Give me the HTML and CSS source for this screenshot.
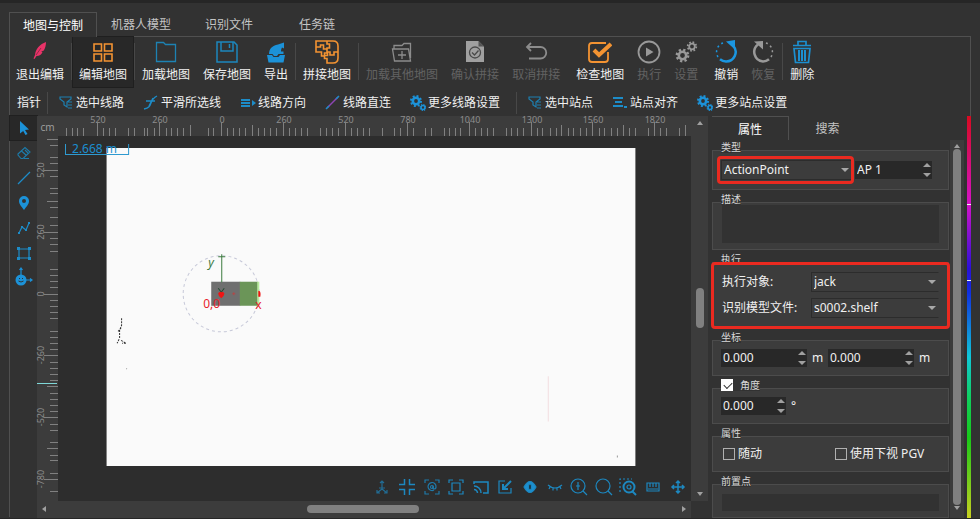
FILE: index.html
```html
<!DOCTYPE html>
<html lang="zh-CN">
<head>
<meta charset="utf-8">
<title>地图与控制</title>
<link rel="stylesheet" href="styles.css">
</head>
<body>
<div class="app">
  <nav class="tabs">
    <button class="tab tab-active">地图与控制</button>
    <button class="tab">机器人模型</button>
    <button class="tab">识别文件</button>
    <button class="tab">任务链</button>
  </nav>
  <main class="pane">
    <div class="toolbar">
      <button class="tool"><svg viewBox="0 0 24 24"><path fill="#e83368" d="M18 2C12 4 7.500 9 7 15L5.500 18.500l1 .5 2-3c3 0 5-1.500 6-4l-1.500-.3 2.800-1.200c1.500-2.500 2.200-5.500 2.200-8.500z"/><path stroke="#7c2440" stroke-width=".8" d="M8 15l5-7"/></svg>退出编辑</button>
      <span class="sep"></span>
      <button class="tool tool-active"><svg viewBox="0 0 24 24" fill="none" stroke="#f39332" stroke-width="1.600"><path d="M3 4h7.500v7H3zM13.500 4H21v7h-7.500zM3 14h7.500v7H3zM13.500 14H21v7h-7.500z"/></svg>编辑地图</button>
      <span class="sep"></span>
      <button class="tool"><svg viewBox="0 0 24 24" fill="none" stroke="#1d82b3" stroke-width="1.300"><path d="M2.500 21.500V2.500h7l2 2h10v17z"/></svg>加载地图</button>
      <button class="tool"><svg viewBox="0 0 24 24" fill="none" stroke="#1d87bd" stroke-width="1.500"><path d="M2 2h17l3 3v17H2z"/><path d="M6 2v9h12V2M14.500 4v4"/></svg>保存地图</button>
      <button class="tool"><svg viewBox="0 0 24 24" fill="#1c92d8"><path d="M3 15h5l1.500 2h5l1.500-2h5l-1.500 7.500h-15zM14 4.500l6-2v6l-2-1c-1 2-1 3-1 4h2.500v2.500h-5l-1.500 2h-3l-1.500-2H5C5 9 8 5.500 14 4.500z"/></svg>导出</button>
      <span class="sep"></span>
      <button class="tool"><svg viewBox="0 0 24 24" fill="none" stroke="#f39332" stroke-width="1.600"><path d="M1 1h17q5 0 5 5v12q0 5-5 5h-6v-4.500H9.500v-3h3V13h-3v3h-3v-4H1zM12 1v3h2.500v4H12v4h3v3h4v-3h4M1 7h4.500V5h3v4H12M12 23v-4"/></svg>拼接地图</button>
      <span class="sep"></span>
      <button class="tool" disabled><svg viewBox="0 0 24 24" fill="none" stroke="#8c8c8c" stroke-width="1.300"><path d="M4 9V5.500h8l2-2h6.500V18M2.500 9h16l2 12h-16L2.500 9zM12 11v8M8 15h8"/></svg>加载其他地图</button>
      <button class="tool" disabled><svg viewBox="0 0 24 24"><path fill="#a0a0a0" d="M3 1h12.500L21 6.500V22H3z"/><path fill="#555" d="M15.500 1v5.500H21z"/><g fill="none" stroke="#4a4a4a" stroke-width="1.300"><circle cx="12" cy="12.500" r="5.500"/><path d="M9 12.500l2.500 2.500 4-4.500"/></g></svg>确认拼接</button>
      <button class="tool" disabled><svg viewBox="0 0 24 24" fill="none" stroke="#8c8c8c" stroke-width="1.800"><path d="M7 3L3 7l4 4M3 7h13.500a5.500 5.500 0 010 11.500H5"/></svg>取消拼接</button>
      <span class="sep sep-blank"></span>
      <button class="tool"><svg viewBox="0 0 24 24" fill="none" stroke="#f39332"><path stroke-width="1.800" d="M20 12v7q0 3-3 3H4q-3 0-3-3V6q0-3 3-3h14"/><path stroke-width="4" d="M6 10l5 5L23 4"/></svg>检查地图</button>
      <button class="tool" disabled><svg viewBox="0 0 24 24"><circle cx="12" cy="12" r="10.500" fill="none" stroke="#999" stroke-width="1.800"/><path fill="#999" d="M9 7.500l7.500 4.500L9 16.500z"/></svg>执行</button>
      <button class="tool" disabled><svg viewBox="0 0 24 24" fill="none" stroke="#999"><circle cx="8.500" cy="15.500" r="3.700" stroke-width="2.600"/><circle cx="8.500" cy="15.500" r="5.700" stroke-width="2.400" stroke-dasharray="2.240 2.240"/><circle cx="18" cy="6.500" r="2.800" stroke-width="1.800"/><circle cx="18" cy="6.500" r="4.300" stroke-width="1.800" stroke-dasharray="1.690 1.690"/></svg>设置</button>
      <span class="sep sep-blank"></span>
      <button class="tool"><svg viewBox="0 0 24 24" fill="none" stroke="#1b96e0" stroke-width="2.500"><path d="M19.500 6A9.500 9.500 0 0112 21.500a9.500 9.500 0 01-6-2.200"/><path stroke-dasharray="2 3" stroke-width="1.500" d="M4 17A9.500 9.500 0 019 3"/><path fill="#1b96e0" stroke="none" d="M12 1.500l9-1.500v9.500z"/></svg>撤销</button>
      <button class="tool" disabled><svg viewBox="0 0 24 24" fill="none" stroke="#999" stroke-width="2.500"><path d="M7 4.500A9.500 9.500 0 0012 21.500a9.500 9.500 0 006-2.200"/><path stroke-dasharray="2 3" stroke-width="1.500" d="M20 17A9.500 9.500 0 0015 3"/><path fill="#999" stroke="none" d="M3 1.500L12 1v8.500z"/></svg>恢复</button>
      <span class="sep"></span>
      <button class="tool"><svg viewBox="0 0 24 24" fill="none" stroke="#1c8fd0" stroke-width="1.700"><path d="M3 5.500h18M8 5V1.500h8V5M4 8.500h16l-1.500 14h-13z"/><path stroke-width="2" d="M9 10v11M12 10v11M15 10v11"/></svg>删除</button>
    </div>

    <div class="toolbar toolbar-small">
      <button class="mini mini-text">指针</button>
      <span class="sep"></span>
      <div class="mini-group">
        <button class="mini"><svg viewBox="0 0 16 16" fill="none" stroke="#1d7fb0" stroke-width="1.200"><path d="M2 2h11v2L9 7v5l-3-2V7L2 4zM10 7h4M10 10h4M10 13h4"/></svg>选中线路</button>
        <button class="mini"><svg viewBox="0 0 16 16" fill="none" stroke="#1d8cc8" stroke-width="1.300"><path d="M1 14c5-1 6-3 7-6s2-5 6-7M3 6h9M6 11l4-8"/></svg>平滑所选线</button>
        <button class="mini"><svg viewBox="0 0 16 16" fill="none" stroke="#1d8cc8" stroke-width="2"><path d="M1 5h9M1 8h9M1 11h9"/><path stroke="none" fill="#1d8cc8" d="M12 5l4 3-4 3z"/></svg>线路方向</button>
        <button class="mini"><svg viewBox="0 0 16 16" fill="none" stroke-width="1.500"><path stroke="#8d45b5" d="M2 13L13 2"/><path stroke="#1d8cc8" d="M1 14l3-3M11 4l3-3"/></svg>线路直连</button>
        <button class="mini"><svg viewBox="0 0 16 16" fill="none" stroke="#1c92d8"><circle cx="6" cy="6" r="3.200" stroke-width="2.600"/><circle cx="6" cy="6" r="5" stroke-width="2" stroke-dasharray="1.960 1.960"/><circle cx="13" cy="12.500" r="2" stroke-width="1.600"/><circle cx="13" cy="12.500" r="3" stroke-width="1.200" stroke-dasharray="1.180 1.180"/></svg>更多线路设置</button>
      </div>
      <span class="sep"></span>
      <div class="mini-group">
        <button class="mini"><svg viewBox="0 0 16 16" fill="none" stroke="#1d7fb0" stroke-width="1.200"><path d="M2 2h11v2L9 7v5l-3-2V7L2 4zM10 7h4M10 10h4M10 13h4"/></svg>选中站点</button>
        <button class="mini"><svg viewBox="0 0 16 16" fill="none" stroke="#1d8cc8" stroke-width="2"><path d="M1 3h10M3 7h7M1 11h10M12 12h3"/></svg>站点对齐</button>
        <button class="mini"><svg viewBox="0 0 16 16" fill="none" stroke="#1c92d8"><circle cx="6" cy="6" r="3.200" stroke-width="2.600"/><circle cx="6" cy="6" r="5" stroke-width="2" stroke-dasharray="1.960 1.960"/><circle cx="13" cy="12.500" r="2" stroke-width="1.600"/><circle cx="13" cy="12.500" r="3" stroke-width="1.200" stroke-dasharray="1.180 1.180"/></svg>更多站点设置</button>
      </div>
    </div>

    <div class="work">
      <aside class="side">
        <button class="side-btn side-active" aria-label="选择"><svg viewBox="0 0 16 16" fill="#1c92d8"><path d="M4 1l9 8.500-4 .5 2.500 4-2 1-2.300-4L4 13.500z"/></svg></button>
        <button class="side-btn" aria-label="橡皮"><svg viewBox="0 0 16 16" fill="none" stroke="#1d7cab" stroke-width="1.100"><path d="M2 9l7-6.500 5 4.500-7 6.500H5L2 10zM5.500 6l5 4.500M8 13.500h5M9 5l3 3"/></svg></button>
        <button class="side-btn" aria-label="直线"><svg viewBox="0 0 16 16" fill="none" stroke="#1d8cc8" stroke-width="1.300"><path d="M2 14L14 2"/></svg></button>
        <button class="side-btn" aria-label="站点"><svg viewBox="0 0 16 16"><path fill="#1c92d8" fill-rule="evenodd" d="M8 1a5 5 0 015 5c0 3.500-3 6-5 9-2-3-5-5.500-5-9a5 5 0 015-5zm0 3a2 2 0 100 4 2 2 0 000-4z"/></svg></button>
        <button class="side-btn" aria-label="折线"><svg viewBox="0 0 16 16" fill="none" stroke="#1d8cc8" stroke-width="1.200"><path d="M3 13l3-6 4 3 3-7"/><path stroke-width="2" d="M2 13h2M5 7h2M9 10h2M12 3h2"/></svg></button>
        <button class="side-btn" aria-label="区域"><svg viewBox="0 0 16 16" fill="none" stroke="#1d8cc8" stroke-width="1.200"><path d="M3 4h10v9H3z"/><path fill="#1d8cc8" stroke="none" d="M1 2h3v3H1zM12 2h3v3h-3zM1 12h3v3H1zM12 12h3v3h-3z"/></svg></button>
        <button class="side-btn" aria-label="重定位"><svg viewBox="0 0 16 16" fill="#1c92d8"><circle cx="5" cy="10" r="5.500"/><path fill="none" stroke="#1c92d8" stroke-width="1.200" d="M5-2v7M9 10h7M3.500 0L5-2 6.500 0M14 8.500l2 1.500-2 1.500"/><path fill="none" stroke="#323232" d="M2.500 11q2.500 2 5 0M3 8.500h1M6 8.500h1"/></svg></button>
      </aside>

      <section class="stage">
        <div class="unit">cm</div>
        <svg class="ruler" id="ruler-x" viewBox="58 116 632 20" preserveAspectRatio="xMinYMax meet"></svg>
        <div class="scroll scroll-y">
          <span class="arrow arrow-up"></span>
          <span class="gap-before"></span><span class="thumb"></span><span class="gap-after"></span>
          <span class="arrow arrow-down"></span>
        </div>
        <svg class="ruler" id="ruler-y" viewBox="37 136 21 364" preserveAspectRatio="xMaxYMin meet"></svg>
        <div class="canvas">
          <svg class="map" viewBox="58 136 632 364" preserveAspectRatio="xMinYMin meet">
            <path fill="#fafafa" d="M106.500 148h528v317.500h-528z"/>
            <path fill="none" stroke="#2f9ad0" d="M65.500 144v10.500h63V144"/>
            <text class="scale-text" x="72" y="153">2.668 m</text>
            <circle cx="221" cy="293.500" r="38" fill="none" stroke="#c6c8d8" stroke-dasharray="3 3"/>
            <path fill="#6f6f6f" d="M211 281.500h29v24h-29z"/>
            <path fill="#6b9558" d="M239.500 281.500h18v24h-18z"/>
            <path fill="#b9eb9d" d="M257 281.500h2v24h-2z"/>
            <path fill="none" stroke="#3c7b3f" d="M221.500 254v28M218 256.500h7"/>
            <path fill="none" stroke="#254a32" d="M218 288l3 4 3-4"/>
            <path fill="#f01414" d="M218 293q1.500-2.500 3-1 1.500-1.500 3 1 .5 2.500-3 5-3.500-2.500-3-5zM258 290.500q3 0 2 6h-2z"/>
            <path stroke="#b34848" d="M232 293.500h3M233.500 292v3"/>
            <text class="axis axis-y" x="208" y="267">y</text>
            <text class="axis" x="203" y="308">0,0</text>
            <text class="axis" x="255" y="309">x</text>
            <path fill="none" stroke="#333" stroke-dasharray="2 1" d="M121.500 318v7l-2 5v8M119 339l-2 4M121 340l5 3h-4M118 331l3-3"/>
            <path stroke="#f2dde0" d="M547.500 376v45"/>
            <path fill="#999" d="M126 368h1v1h-1zM616 455h1v2h-1z"/>
          </svg>
          <div class="view-tools">
            <button aria-label="坐标轴"><svg viewBox="0 0 16 16" opacity=".7"><path d="M8 2v8l-5 4M8 10l5 4M6 4l2-2 2 2M3 11v3h3M13 11v3h-3M5 9h6"/></svg></button>
            <button aria-label="收缩"><svg viewBox="0 0 16 16"><path stroke-width="1.500" d="M5.500 0v5.500H0M10.500 0v5.500H16M5.500 16v-5.500H0M10.500 16v-5.500H16"/></svg></button>
            <button aria-label="机器人居中"><svg viewBox="0 0 16 16" opacity=".85"><path d="M1 4V1h4M11 1h4v3M1 12v3h4M11 15h4v-3M10 11a4 4 0 112-3q0 2-2 2-2-1-1-3"/><circle cx="8" cy="8" r="1.500"/></svg></button>
            <button aria-label="适应窗口"><svg viewBox="0 0 16 16"><path d="M1 4V1h4M11 1h4v3M1 12v3h4M11 15h4v-3M4 4h8v8H4z"/></svg></button>
            <button aria-label="投屏"><svg viewBox="0 0 16 16"><path stroke-width="1.500" d="M1 5V3h14v11h-5M1 7a7 7 0 017 7M1 10.500A3.500 3.500 0 014.500 14"/></svg></button>
            <button aria-label="缩放"><svg viewBox="0 0 16 16"><path d="M8 2H2v12h12V9"/><path stroke-width="2" d="M14 2L6 10M6 5v5h5"/></svg></button>
            <button aria-label="显示"><svg viewBox="0 0 16 16"><path fill="#1c8fd0" d="M2 8q6-11 12 0-6 11-12 0z"/><ellipse cx="8" cy="8" rx="1.500" ry="3" fill="#1b2d38"/></svg></button>
            <button aria-label="隐藏"><svg viewBox="0 0 16 16"><path d="M1 6q7 6 14 0M3 8l-1 2M6 9v2.500M10 9v2.500M13 8l1 2"/></svg></button>
            <button aria-label="放大"><svg viewBox="0 0 16 16"><circle cx="7" cy="7" r="7"/><path d="M12 12l4 4M7 3v8M5 7h4"/></svg></button>
            <button aria-label="缩小"><svg viewBox="0 0 16 16"><circle cx="7" cy="7" r="7"/><path d="M12 12l4 4"/></svg></button>
            <button aria-label="框选放大"><svg viewBox="0 0 16 16"><path stroke-dasharray="2 2" d="M0 13V0h12"/><circle cx="9" cy="8" r="5.500" stroke-width="2"/><path stroke-width="2" d="M12 12l4 4"/><circle cx="9" cy="8" r="2"/></svg></button>
            <button aria-label="测量"><svg viewBox="0 0 16 16"><path d="M2 4h12v8H2zM5 4v4M8 4v4M11 4v4M3 10h10"/></svg></button>
            <button aria-label="移动"><svg viewBox="0 0 16 16"><path stroke-width="1.500" d="M8 2v12M2 8h12M6 4l2-2 2 2M6 12l2 2 2-2M4 6L2 8l2 2M12 6l2 2-2 2"/></svg></button>
          </div>
        </div>
        <div class="scroll scroll-x">
          <span class="arrow arrow-left"></span>
          <span class="gap-before"></span><span class="thumb"></span><span class="gap-after"></span>
          <span class="arrow arrow-right"></span>
        </div>
      </section>

      <section class="props">
        <nav class="prop-tabs">
          <button class="prop-tab prop-tab-active">属性</button>
          <button class="prop-tab">搜索</button>
        </nav>
        <div class="prop-body">
          <form class="groups">
            <div class="group">
              <div class="title">类型</div>
              <div class="box box-fields">
                <span class="pick pick-type marked"><select aria-label="类型"><option>ActionPoint</option></select></span>
                <span class="spin spin-name"><input type="text" value="AP 1" aria-label="名称"><i></i></span>
              </div>
            </div>
            <div class="group">
              <label class="title" for="desc">描述</label>
              <div class="box box-desc"><textarea id="desc"></textarea></div>
            </div>
            <div class="group">
              <div class="title">执行</div>
              <div class="box box-exec marked">
                <div class="line"><label for="target">执行对象:</label><span class="pick"><select id="target"><option>jack</option></select></span></div>
                <div class="line"><label for="model">识别模型文件:</label><span class="pick"><select id="model"><option>s0002.shelf</option></select></span></div>
              </div>
            </div>
            <div class="group">
              <div class="title">坐标</div>
              <div class="box box-fields box-short">
                <span class="spin"><input type="text" value="0.000" aria-label="X"><i></i></span><span class="suffix">m</span>
                <span class="spin"><input type="text" value="0.000" aria-label="Y"><i></i></span><span class="suffix">m</span>
              </div>
            </div>
            <div class="group">
              <label class="title title-check"><input type="checkbox" class="check check-on" checked>角度</label>
              <div class="box box-fields box-short">
                <span class="spin spin-angle"><input type="text" value="0.000" aria-label="角度"><i></i></span><span class="suffix">°</span>
              </div>
            </div>
            <div class="group">
              <div class="title">属性</div>
              <div class="box box-checks">
                <label><input type="checkbox" class="check">随动</label>
                <label><input type="checkbox" class="check">使用下视 PGV</label>
              </div>
            </div>
            <div class="group">
              <label class="title" for="pre">前置点</label>
              <div class="box box-pre"><input type="text" id="pre"></div>
            </div>
          </form>
          <div class="scroll scroll-prop">
            <span class="arrow arrow-up"></span>
            <span class="thumb"></span>
            <span class="arrow arrow-down"></span>
          </div>
        </div>
      </section>
      <div class="hue"></div>
    </div>
  </main>
</div>
<script src="rulers.js"></script>
</body>
</html>
```
FILE: styles.css
```css
* {
  box-sizing: border-box;
}

body {
  margin: 0;
  background: #323232;
  color: #f0f0f0;
  font: 12px/16px "Noto Sans", "Noto Sans CJK SC", sans-serif;
}

button,
input,
select,
textarea {
  margin: 0;
  padding: 0;
  border: 0;
  border-radius: 0;
  background: none;
  color: inherit;
  font: inherit;
}

.app {
  display: flex;
  flex-direction: column;
  height: 100vh;
  padding: 9px 9px 1px;
  border-top: 3px solid #262626;
  border-bottom: 1px solid #262626;
}

.tabs {
  display: flex;
  height: 24px;
}

.tab {
  min-width: 88px;
  padding: 2px 12px 0;
  color: #c4c4c4;
}

.tab-active {
  position: relative;
  height: 25px;
  border: 1px solid #505050;
  border-bottom: 0;
  background: #323232;
  color: #fff;
  z-index: 1;
}

.pane {
  display: flex;
  flex: 1;
  flex-direction: column;
  min-height: 0;
  border: 1px solid #505050;
  border-width: 1px 0 0 1px;
}

.toolbar {
  display: flex;
  gap: 1px;
  height: 50px;
  border-right: 1px solid #505050;
}

.tool {
  display: flex;
  flex-direction: column;
  align-items: center;
  gap: 3px;
  padding: 3px 6px 0;
  white-space: nowrap;
}

.tool svg {
  width: 24px;
  height: 24px;
}

.tool:disabled {
  color: #626262;
}

.tool-active {
  background: #282828;
  box-shadow: 0 0 0 1px #1f1f1f;
}

.sep {
  width: 1px;
  margin: 6px 0 7px;
  background: #484848;
}

.sep-blank {
  width: 2px;
  background: none;
}

.toolbar-small {
  align-items: center;
  gap: 6px;
  height: 29px;
  padding: 2px 0 0 7px;
}

.toolbar-small .sep {
  height: 22px;
  margin: 0;
}

.mini-group {
  display: flex;
  gap: 19px;
  padding: 0 10px 0 4px;
}

.mini {
  display: flex;
  align-items: center;
  gap: 2px;
  white-space: nowrap;
}

.mini svg {
  width: 16px;
  height: 16px;
}

.work {
  display: grid;
  flex: 1;
  grid-template-columns: 27px minmax(0, 1fr) 259px 4px;
  min-height: 0;
}

.side {
  display: flex;
  flex-direction: column;
  gap: 1px;
}

.side-btn {
  display: flex;
  align-items: center;
  justify-content: center;
  height: 24px;
}

.side-btn svg {
  width: 16px;
  height: 16px;
  overflow: visible;
}

.side-active {
  background: #282828;
  box-shadow: 0 0 0 1px #202020;
}

.stage {
  display: grid;
  grid-template: 20px minmax(0, 1fr) 17px / 21px minmax(0, 1fr) 17px;
}

.unit {
  background: #3c3c3c;
  color: #9c9c9c;
  font-size: 10px;
  line-height: 22px;
  text-align: center;
}

.ruler {
  display: block;
  width: 100%;
  height: 100%;
  background: #3c3c3c;
  overflow: visible;
}

.ruler path {
  fill: none;
  stroke: #808080;
}

.ruler text {
  fill: #8c8c8c;
  font-size: 9px;
  text-anchor: middle;
}

.ruler .cursor {
  stroke: #7fd8d8;
  stroke-width: 1px;
}

.canvas {
  position: relative;
  background: #2d2d2d;
}

.map {
  display: block;
  width: 100%;
  height: 100%;
}

.scale-text {
  fill: #1b8fd0;
}

.axis {
  fill: #e81c2c;
}

.axis-y {
  fill: #3c7b3f;
  font-style: italic;
}

.view-tools {
  position: absolute;
  right: 1px;
  bottom: 0;
  display: grid;
  grid-template-columns: repeat(13, 1fr);
  width: 320px;
  height: 27px;
}

.view-tools button {
  display: flex;
  align-items: center;
  justify-content: center;
}

.view-tools svg {
  width: 16px;
  height: 16px;
  overflow: visible;
  fill: none;
  stroke: #1d88c0;
  stroke-width: 1.2;
}

.scroll {
  display: flex;
  align-items: center;
  background: #3c3c3c;
}

.scroll-y {
  grid-row: 1 / 3;
  grid-column: 3;
  flex-direction: column;
  padding: 5px 0;
}

.scroll-x {
  grid-row: 3;
  grid-column: 1 / 3;
  padding: 0 5px;
}

.thumb {
  border-radius: 4px;
  background: #808080;
}

.scroll-y .thumb {
  flex: 39;
  width: 8px;
}

.scroll-y .gap-before {
  flex: 161;
}

.scroll-y .gap-after {
  flex: 161;
}

.scroll-x .thumb {
  flex: 111;
  height: 8px;
}

.scroll-x .gap-before {
  flex: 259;
}

.scroll-x .gap-after {
  flex: 261;
}

.arrow {
  border: 3px solid transparent;
}

.arrow-up {
  border-top-width: 0;
  border-bottom: 4px solid #a0a0a0;
}

.arrow-down {
  border-bottom-width: 0;
  border-top: 4px solid #a0a0a0;
}

.arrow-left {
  border-left-width: 0;
  border-right: 4px solid #a0a0a0;
}

.arrow-right {
  border-right-width: 0;
  border-left: 4px solid #a0a0a0;
}

.props {
  display: flex;
  flex-direction: column;
  min-height: 0;
  padding-left: 4px;
}

.prop-tabs {
  display: flex;
  height: 24px;
}

.prop-tab {
  width: 77px;
  padding-top: 2px;
  color: #c4c4c4;
}

.prop-tab-active {
  border: 1px solid #505050;
  border-width: 1px 1px 0 0;
  color: #fff;
}

.prop-body {
  display: flex;
  flex: 1;
  gap: 1px;
  min-height: 0;
}

.groups {
  display: flex;
  flex: 1;
  flex-direction: column;
  gap: 3px;
  margin: 0 -3px;
  padding: 1px 3px 0;
  overflow: hidden;
}

.title {
  position: relative;
  display: block;
  width: max-content;
  height: 12px;
  margin: 0 0 -3px 9px;
  background: #323232;
  color: #d8d8d8;
  font-size: 10px;
  line-height: 12px;
}

.box {
  border: 1px solid #4c4c4c;
  background: #3c3c3c;
}

.box-fields {
  display: flex;
  align-items: center;
  height: 40px;
  padding-left: 8px;
}

.box-short {
  height: 36px;
}

.box-desc {
  height: 48px;
  padding: 2px 9px 6px;
}

.box-desc textarea {
  display: block;
  width: 100%;
  height: 100%;
  background: #323232;
  resize: none;
}

.box-exec {
  display: flex;
  flex-direction: column;
  justify-content: center;
  gap: 6px;
  height: 66px;
  padding: 0 9px;
}

.line {
  display: flex;
  align-items: center;
}

.line label {
  width: 89px;
  white-space: nowrap;
}

.line .pick {
  flex: 1;
}

.marked {
  position: relative;
}

.marked::before {
  position: absolute;
  inset: -1px -2px -2px;
  border: 3px solid #ea2a20;
  border-radius: 4px;
  content: "";
  pointer-events: none;
  z-index: 1;
}

.pick-type.marked::before {
  inset: -5px -3px -5px -5px;
}

.pick {
  position: relative;
  height: 20px;
  border: 1px solid #2c2c2c;
  border-right-color: #3c3c3c;
}

.pick::after {
  position: absolute;
  top: 7px;
  right: 2px;
  border: 4px solid transparent;
  border-top-color: #a8a8a8;
  border-bottom-width: 0;
  content: "";
}

.pick select {
  display: block;
  width: 100%;
  height: 18px;
  padding-left: 2px;
  appearance: none;
}

.pick-type {
  width: 131px;
  margin-right: 3px;
}

.spin {
  display: flex;
  align-items: center;
  width: 86px;
  height: 18px;
  padding: 0 1px 0 2px;
  background: #282828;
}

.spin-name {
  width: 77px;
}

.spin-angle {
  width: 65px;
}

.spin input {
  flex: 1;
  width: 0;
  min-width: 0;
}

.spin i {
  display: flex;
  flex-direction: column;
  justify-content: space-between;
  height: 14px;
}

.spin i::before,
.spin i::after {
  border: 4px solid transparent;
  content: "";
}

.spin i::before {
  border-top-width: 0;
  border-bottom-color: #a0a0a0;
}

.spin i::after {
  border-bottom-width: 0;
  border-top-color: #a0a0a0;
}

.suffix {
  width: 21px;
  padding-left: 5px;
}

.check {
  width: 12px;
  height: 12px;
  border: 1px solid #b0b0b0;
  appearance: none;
}

.title-check {
  display: flex;
  align-items: center;
  gap: 7px;
}

.check-on {
  position: relative;
  border: 0;
  background: #fff;
}

.check-on::after {
  position: absolute;
  top: 3px;
  left: 3px;
  width: 7px;
  height: 4px;
  border: solid #303030;
  border-width: 0 0 1px 1px;
  content: "";
  transform: rotate(-45deg);
}

.box-checks {
  display: grid;
  grid-template-columns: 112px 1fr;
  align-items: center;
  height: 36px;
  padding-left: 10px;
}

.box-checks label {
  display: flex;
  align-items: center;
  gap: 3px;
}

.box-pre {
  height: 34px;
  padding: 9px 9px 6px;
}

.box-pre input {
  display: block;
  width: 100%;
  height: 17px;
  background: #323232;
}

.scroll-prop {
  flex-direction: column;
  width: 14px;
  gap: 1px;
  margin-right: 3px;
  padding: 4px 0 8px;
}

.scroll-prop .thumb {
  flex: 1;
  width: 8px;
}

.hue {
  background:
    linear-gradient(#f4f4f4, #f4f4f4) 0 22% / 100% 1px no-repeat,
    linear-gradient(#f4f4f4, #f4f4f4) 0 41% / 100% 1px no-repeat,
    linear-gradient(#d80a20, #d412c8 22%, #2a10d8 38%, #1030e0 44%, #10c8d8 60%, #10d060 70%, #18c818 80%, #c8d020);
}
```
FILE: rulers.js
```js
const SVG = "http://www.w3.org/2000/svg";

const rulerX = {
  major: [97, 159, 221, 283, 345, 407, 469, 531, 592, 654],
  labels: ["520", "260", "0", "260", "520", "780", "1040", "1300", "1560", "1820"],
  half: [190, 252, 561, 623, 685],
  minor: [66, 72, 77, 83, 103, 109, 115, 128, 134, 144, 147, 154, 166, 171, 177, 183, 208, 213,
    227, 233, 239, 245, 258, 264, 270, 276, 289, 295, 301, 307, 320, 326, 332, 338, 351, 357, 363,
    369, 382, 394, 400, 413, 425, 431, 444, 449, 455, 460, 475, 481, 487, 493, 506, 511, 517, 523,
    537, 542, 550, 556, 568, 573, 580, 586, 599, 604, 611, 617, 629, 635, 648, 660, 666, 679]
};

const rulerY = {
  major: [170, 232, 294, 355, 417, 479],
  labels: ["520", "260", "0", "-260", "-520", "-780"],
  half: [139, 201, 386, 448],
  minor: [145, 157, 163, 176, 188, 193, 207, 217, 225, 238, 244, 251, 269, 275, 281, 287, 300,
    306, 312, 318, 331, 337, 343, 349, 362, 368, 374, 380, 393, 399, 405, 411, 424, 430, 442,
    455, 460, 473, 491]
};

function add(parent, name, attributes, text) {
  const node = document.createElementNS(SVG, name);
  for (const key in attributes) node.setAttribute(key, attributes[key]);
  if (text) node.textContent = text;
  parent.append(node);
}

function draw(id, ruler, tick, label) {
  const svg = document.getElementById(id);
  const lines = [[ruler.major, 14], [ruler.half, 11], [ruler.minor, 8]]
    .map(([places, length]) => places.map(p => tick(p, length)).join("")).join("");
  ruler.major.forEach((p, i) => add(svg, "text", label(p), ruler.labels[i]));
  add(svg, "path", { d: lines });
  return svg;
}

draw("ruler-x", rulerX, (p, n) => `M${p + 0.5} 136v-${n}`, p => ({ x: p + 1, y: 123 }));
const left = draw("ruler-y", rulerY, (p, n) => `M58 ${p + 0.5}h-${n}`,
  p => ({ transform: `translate(44 ${p}) rotate(-90)` }));
add(left, "path", { d: "M37 383.500h20", class: "cursor" });
```
